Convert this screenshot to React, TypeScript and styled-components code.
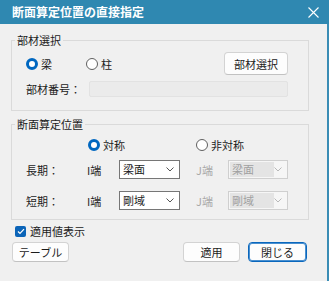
import styled, { createGlobalStyle } from "styled-components";

const GlobalStyle = createGlobalStyle`
  html, body {
    margin: 0;
    padding: 0;
    background: #3a8db5;
  }
  body {
    font-family: "Noto Sans CJK JP", "Noto Sans", sans-serif;
    font-size: 11px;
    color: #1b1b1b;
  }
`;

const Screen = styled.div`
  display: flex;
  width: 329px;
  height: 281px;
  overflow: hidden;
`;

const Dialog = styled.div`
  width: 327px;
  height: 281px;
  background: #f0f0f0;
  display: flex;
  flex-direction: column;
`;

const TitleBar = styled.div`
  height: 24px;
  background: #2f88b1;
  display: flex;
  align-items: center;
  padding: 0 8px 0 12px;
  color: #ffffff;
  font-size: 12px;
  font-weight: 700;
  line-height: 14px;
`;

const TitleText = styled.div`
  flex: 1;
`;

const Body = styled.div`
  padding: 9px 0 0 11px;
  display: flex;
  flex-direction: column;
`;

const Group = styled.fieldset<{ $mt?: number }>`
  margin: ${(p) => p.$mt ?? 0}px 0 0 0;
  padding: 0;
  width: 298px;
  box-sizing: border-box;
  border: 1px solid #dadada;
  min-inline-size: 0;
`;

const Legend = styled.legend`
  margin-left: 3px;
  padding: 0 2px;
  font-size: 11px;
  line-height: 14px;
  color: #1b1b1b;
`;

const GroupInner = styled.div<{ $pad: string }>`
  padding: ${(p) => p.$pad};
  display: flex;
  flex-direction: column;
`;

const Row = styled.div<{ $h: number; $mt?: number }>`
  display: flex;
  align-items: center;
  height: ${(p) => p.$h}px;
  margin-top: ${(p) => p.$mt ?? 0}px;
  line-height: 14px;
`;

const Cell = styled.div<{ $w: number; $muted?: boolean }>`
  width: ${(p) => p.$w}px;
  flex: none;
  display: flex;
  align-items: center;
  color: ${(p) => (p.$muted ? "#a8a8a8" : "#1b1b1b")};
`;

const RadioLabel = styled.label<{ $w?: number }>`
  display: flex;
  align-items: center;
  gap: 3px;
  width: ${(p) => (p.$w ? `${p.$w}px` : "auto")};
  flex: none;
`;

const RadioDot = styled.span<{ $on: boolean }>`
  width: 12px;
  height: 12px;
  box-sizing: border-box;
  border-radius: 50%;
  flex: none;
  background: ${(p) => (p.$on ? "#ffffff" : "#ffffff")};
  border: ${(p) => (p.$on ? "3.5px solid #0067c0" : "1px solid #5f5f5f")};
`;

const PushButton = styled.button<{ $w: number; $h: number; $default?: boolean }>`
  width: ${(p) => p.$w}px;
  height: ${(p) => p.$h}px;
  box-sizing: border-box;
  padding: 0;
  flex: none;
  border-radius: 4px;
  background: #fdfdfd;
  border: 1px solid ${(p) => (p.$default ? "#0a67bd" : "#d3d3d3")};
  border-bottom-color: ${(p) => (p.$default ? "#0a67bd" : "#c2c2c2")};
  box-shadow: ${(p) => (p.$default ? "inset 0 0 0 1px #4a90d0" : "none")};
  font-family: inherit;
  font-size: 11px;
  line-height: 14px;
  color: #1b1b1b;
`;

const TextBox = styled.div`
  flex: 1;
  height: 16px;
  box-sizing: border-box;
  background: #ebebeb;
  border: 1px solid #e2e2e2;
  border-radius: 2px;
`;

const Select = styled.div<{ $disabled?: boolean }>`
  width: ${(p) => (p.$disabled ? 60 : 61)}px;
  height: 19px;
  box-sizing: border-box;
  flex: none;
  display: flex;
  align-items: center;
  padding: 1px;
  background: ${(p) => (p.$disabled ? "#f6f6f6" : "#ffffff")};
  border: 1px solid ${(p) => (p.$disabled ? "#cfcfcf" : "#767676")};
  color: ${(p) => (p.$disabled ? "#a0a0a0" : "#1b1b1b")};
`;

const SelectValue = styled.div<{ $disabled?: boolean }>`
  width: 42px;
  height: 15px;
  padding-left: 2px;
  line-height: 15px;
  background: ${(p) => (p.$disabled ? "#e4e4e4" : "transparent")};
`;

const Chevron = styled.svg`
  margin-left: auto;
  margin-right: 4px;
`;

const CheckRow = styled.label`
  display: flex;
  align-items: center;
  gap: 4px;
  height: 14px;
  margin-top: 4px;
  padding-left: 4px;
  line-height: 14px;
`;

const CheckBox = styled.span`
  width: 11px;
  height: 11px;
  border-radius: 2px;
  background: #0b64b8;
  display: flex;
  align-items: center;
  justify-content: center;
`;

const ButtonBar = styled.div`
  display: flex;
  align-items: center;
  gap: 8px;
  margin-top: 4px;
  padding-left: 1px;
  width: 295px;
`;

const Spacer = styled.div`
  flex: 1;
`;

const Edge = styled.div`
  flex: 1;
  background: linear-gradient(#2f88b1 0 24px, #3a8db5 24px);
`;

function Radio({ label, on, w }: { label: string; on: boolean; w?: number }) {
  return (
    <RadioLabel $w={w}>
      <RadioDot $on={on} />
      {label}
    </RadioLabel>
  );
}

function Dropdown({ value, disabled }: { value: string; disabled?: boolean }) {
  return (
    <Select $disabled={disabled}>
      <SelectValue $disabled={disabled}>{value}</SelectValue>
      <Chevron width="8" height="5" viewBox="0 0 8 5">
        <polyline
          points="0.5,0.5 4,4 7.5,0.5"
          fill="none"
          stroke={disabled ? "#b8b8b8" : "#555"}
          strokeWidth="1"
        />
      </Chevron>
    </Select>
  );
}

export default function App() {
  const rows = [
    { label: "長期：", value: "梁面" },
    { label: "短期：", value: "剛域" },
  ];

  return (
    <>
      <GlobalStyle />
      <Screen>
        <Dialog>
          <TitleBar>
            <TitleText>断面算定位置の直接指定</TitleText>
            <svg width="11" height="11" viewBox="0 0 11 11">
              <path d="M0.5 0.5 L10.5 10.5 M10.5 0.5 L0.5 10.5" stroke="#fff" strokeWidth="1.1" />
            </svg>
          </TitleBar>
          <Body>
            <Group>
              <Legend>部材選択</Legend>
              <GroupInner $pad="5px 20px 13px 14px">
                <Row $h={23}>
                  <Radio label="梁" on w={60} />
                  <Radio label="柱" on={false} />
                  <Spacer />
                  <PushButton $w={64} $h={23}>部材選択</PushButton>
                </Row>
                <Row $h={16} $mt={6}>
                  <Cell $w={63}>部材番号：</Cell>
                  <TextBox />
                </Row>
              </GroupInner>
            </Group>

            <Group $mt={6}>
              <Legend>断面算定位置</Legend>
              <GroupInner $pad="7px 0 9px 14px">
                <Row $h={14}>
                  <Cell $w={62} />
                  <Radio label="対称" on w={108} />
                  <Radio label="非対称" on={false} />
                </Row>
                {rows.map((r, i) => (
                  <Row key={r.label} $h={19} $mt={i === 0 ? 8 : 12}>
                    <Cell $w={61}>{r.label}</Cell>
                    <Cell $w={32}>I端</Cell>
                    <Dropdown value={r.value} />
                    <Cell $w={16} />
                    <Cell $w={32} $muted>J端</Cell>
                    <Dropdown value={r.value} disabled />
                  </Row>
                ))}
              </GroupInner>
            </Group>

            <CheckRow>
              <CheckBox>
                <svg width="8" height="7" viewBox="0 0 8 7">
                  <polyline points="1,3.5 3,5.5 7,1.2" fill="none" stroke="#fff" strokeWidth="1.2" />
                </svg>
              </CheckBox>
              適用値表示
            </CheckRow>

            <ButtonBar>
              <PushButton $w={57} $h={20}>テーブル</PushButton>
              <Spacer />
              <PushButton $w={57} $h={20}>適用</PushButton>
              <PushButton $w={59} $h={20} $default>閉じる</PushButton>
            </ButtonBar>
          </Body>
        </Dialog>
        <Edge />
      </Screen>
    </>
  );
}
